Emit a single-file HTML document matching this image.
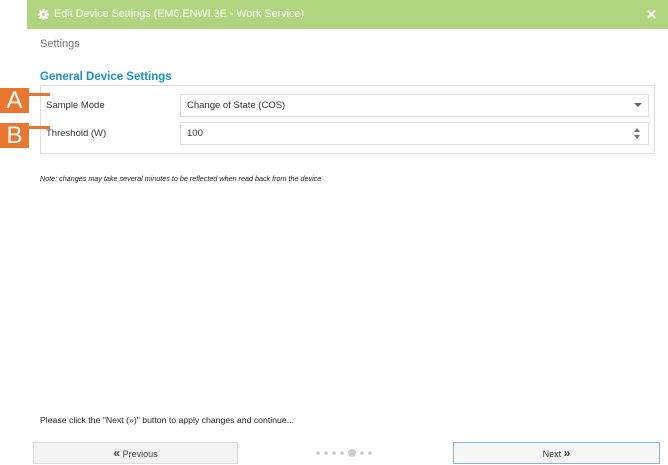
<!DOCTYPE html>
<html><head><style>
body{margin:0;width:668px;height:464px;position:relative;background:#fff;font-family:"Liberation Sans",Arial,sans-serif;overflow:hidden}
.hdr{position:absolute;left:27px;top:0;width:641px;height:29px;background:#b1d47f;color:#fff;font-size:10.8px;line-height:29px}
.abs{position:absolute}
.box{position:absolute;border:1px solid #ddd;background:#fff}
.lbl{position:absolute;background:#e8762f;width:29px;height:25px;color:#fff;font-size:24px;line-height:26px;text-align:center}
.ln{position:absolute;height:3px;background:#e8762f}
</style></head><body>
<div class="hdr"><svg class="abs" style="left:11px;top:9px" width="11" height="11" viewBox="0 0 12 12"><circle cx="6" cy="6" r="4" fill="#fff"/><g stroke="#fff" stroke-width="2.4"><line x1="6" y1="0" x2="6" y2="12"/><line x1="0" y1="6" x2="12" y2="6"/><line x1="1.8" y1="1.8" x2="10.2" y2="10.2"/><line x1="10.2" y1="1.8" x2="1.8" y2="10.2"/></g><circle cx="6" cy="6" r="1.6" fill="#b1d47f"/></svg><span class="abs" style="left:27px;top:0">Edit Device Settings (EM6.ENWI.3E - Work Service)</span><span class="abs" style="left:619px;top:0;font-weight:bold;font-size:13px">✕</span></div>
<div class="abs" style="left:40px;top:38px;font-size:11px;color:#777">Settings</div>
<div class="abs" style="left:40px;top:71px;font-size:11.5px;color:#1b8fc5;font-weight:bold">General Device Settings</div>
<div class="box" style="left:40px;top:85px;width:613px;height:67px"></div>
<div class="abs" style="left:46px;top:100px;font-size:9.5px;color:#333">Sample Mode</div>
<div class="abs" style="left:46px;top:128px;font-size:9.5px;color:#333">Threshold (W)</div>
<div class="box" style="left:180px;top:94px;width:467px;height:21px"></div>
<div class="box" style="left:180px;top:122px;width:467px;height:21px"></div>
<div class="abs" style="left:187px;top:100px;font-size:9.5px;color:#333">Change of State (COS)</div>
<div class="abs" style="left:187px;top:128px;font-size:9.5px;color:#333">100</div>
<div class="abs" style="left:634px;top:103px;width:0;height:0;border-left:4px solid transparent;border-right:4px solid transparent;border-top:4px solid #666"></div>
<div class="abs" style="left:634px;top:128px;width:0;height:0;border-left:3.5px solid transparent;border-right:3.5px solid transparent;border-bottom:4px solid #777"></div>
<div class="abs" style="left:634px;top:135px;width:0;height:0;border-left:3.5px solid transparent;border-right:3.5px solid transparent;border-top:4px solid #777"></div>
<div class="lbl" style="left:0;top:88px">A</div>
<div class="ln" style="left:29px;top:93px;width:21px"></div>
<div class="lbl" style="left:0;top:123px">B</div>
<div class="ln" style="left:29px;top:126px;width:21px"></div>
<div class="abs" style="left:40px;top:174px;font-size:7.2px;color:#222;font-style:italic">Note: changes may take several minutes to be reflected when read back from the device</div>
<div class="abs" style="left:40px;top:415px;font-size:8.7px;color:#222">Please click the "Next (»)" button to apply changes and continue...</div>
<div class="abs" style="left:33px;top:442px;width:203px;height:20px;background:#f3f3f3;border:1px solid #ddd;font-size:9px;color:#444;text-align:center;line-height:21px"><b style="font-size:12px">«</b> Previous</div>
<div class="abs" style="left:453px;top:442px;width:205px;height:20px;background:#f7f7f7;border:1px solid #8ab2d6;font-size:9px;color:#333;text-align:center;line-height:21px">Next <b style="font-size:12px">»</b></div>
<svg class="abs" style="left:315px;top:448px" width="60" height="10"><g fill="#ccc"><circle cx="3" cy="5" r="1.8"/><circle cx="11" cy="5" r="1.8"/><circle cx="19" cy="5" r="1.8"/><circle cx="27" cy="5" r="1.8"/><circle cx="37" cy="5" r="4"/><circle cx="47" cy="5" r="1.8"/><circle cx="55" cy="5" r="1.8"/></g></svg>
</body></html>
